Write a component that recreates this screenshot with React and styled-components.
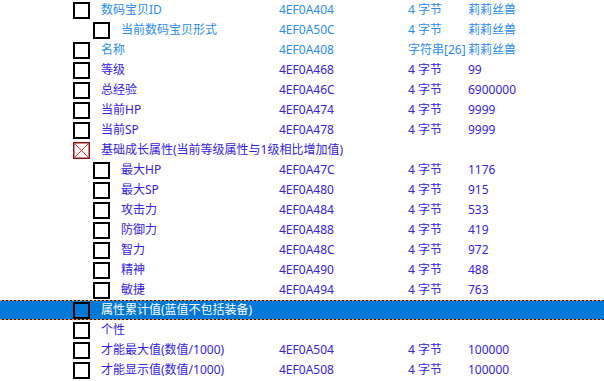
import React from 'react';
import styled, { createGlobalStyle } from 'styled-components';

const GlobalStyle = createGlobalStyle`
  html, body {
    margin: 0;
    padding: 0;
    background: #ffffff;
  }
  body {
    font-family: "Noto Sans", "Noto Sans CJK SC", sans-serif;
    font-size: 12px;
  }
`;

const List = styled.div`
  display: flex;
  flex-direction: column;
  width: 604px;
  height: 381px;
  overflow: hidden;
`;

const dots = 'repeating-linear-gradient(90deg, #f39a2c 0 2px, #1a1a1a 2px 4px)';

const Row = styled.div`
  display: grid;
  grid-template-columns: 279px 129px 60px 1fr;
  align-items: center;
  height: 20px;
  line-height: 20px;
  white-space: nowrap;
  color: ${({ $selected, $light }) => ($selected ? '#ffffff' : $light ? '#2a8cf2' : '#3323e6')};
  background: ${({ $selected }) => ($selected ? '#0078d7' : 'transparent')};
  ${({ $selected }) => $selected && `
    background-image: ${dots}, ${dots};
    background-size: 100% 1px, 100% 1px;
    background-position: 0 0, 0 100%;
    background-repeat: no-repeat;
  `}
`;

const NameCell = styled.div`
  display: flex;
  align-items: center;
  gap: 11px;
  padding-left: ${({ $level }) => 73 + $level * 20}px;
`;

const Box = styled.span`
  display: inline-block;
  box-sizing: border-box;
  width: 17px;
  height: 17px;
  flex: none;
  border: 2px solid #000000;
  margin-top: 1px;
`;

const CrossBox = styled.svg`
  display: block;
  width: 17px;
  height: 17px;
  flex: none;
  margin-top: 1px;
`;

const Cell = styled.div``;

const rows = [
  { name: '数码宝贝ID', addr: '4EF0A404', size: '4 字节', value: '莉莉丝兽', light: true },
  { name: '当前数码宝贝形式', addr: '4EF0A50C', size: '4 字节', value: '莉莉丝兽', light: true, level: 1 },
  { name: '名称', addr: '4EF0A408', size: '字符串[26]', value: '莉莉丝兽', light: true },
  { name: '等级', addr: '4EF0A468', size: '4 字节', value: '99' },
  { name: '总经验', addr: '4EF0A46C', size: '4 字节', value: '6900000' },
  { name: '当前HP', addr: '4EF0A474', size: '4 字节', value: '9999' },
  { name: '当前SP', addr: '4EF0A478', size: '4 字节', value: '9999' },
  { name: '基础成长属性(当前等级属性与1级相比增加值)', cross: true },
  { name: '最大HP', addr: '4EF0A47C', size: '4 字节', value: '1176', level: 1 },
  { name: '最大SP', addr: '4EF0A480', size: '4 字节', value: '915', level: 1 },
  { name: '攻击力', addr: '4EF0A484', size: '4 字节', value: '533', level: 1 },
  { name: '防御力', addr: '4EF0A488', size: '4 字节', value: '419', level: 1 },
  { name: '智力', addr: '4EF0A48C', size: '4 字节', value: '972', level: 1 },
  { name: '精神', addr: '4EF0A490', size: '4 字节', value: '488', level: 1 },
  { name: '敏捷', addr: '4EF0A494', size: '4 字节', value: '763', level: 1 },
  { name: '属性累计值(蓝值不包括装备)', selected: true },
  { name: '个性' },
  { name: '才能最大值(数值/1000)', addr: '4EF0A504', size: '4 字节', value: '100000' },
  { name: '才能显示值(数值/1000)', addr: '4EF0A508', size: '4 字节', value: '100000' },
];

const Check = ({ cross }) =>
  cross ? (
    <CrossBox viewBox="0 0 17 17">
      <rect x="0.75" y="0.75" width="15.5" height="15.5" fill="none" stroke="#8b1010" strokeWidth="1.5" />
      <path d="M2 2 L15 15 M15 2 L2 15" stroke="#ff2020" strokeWidth="1" />
    </CrossBox>
  ) : (
    <Box />
  );

export default function App() {
  return (
    <>
      <GlobalStyle />
      <List>
        {rows.map((r, i) => (
          <Row key={i} $light={r.light} $selected={r.selected}>
            <NameCell $level={r.level || 0}>
              <Check cross={r.cross} />
              <span>{r.name}</span>
            </NameCell>
            <Cell>{r.addr}</Cell>
            <Cell>{r.size}</Cell>
            <Cell>{r.value}</Cell>
          </Row>
        ))}
      </List>
    </>
  );
}
